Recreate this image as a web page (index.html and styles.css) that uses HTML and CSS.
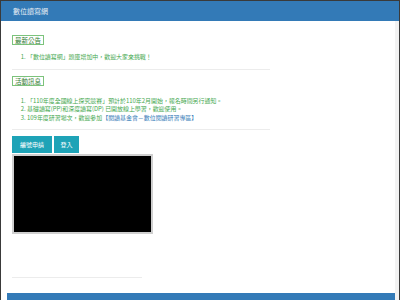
FILE: index.html
```html
<!DOCTYPE html>
<html lang="zh-Hant">
<head>
<meta charset="utf-8">
<link rel="stylesheet" href="styles.css">
</head>
<body>
<div class="window">
  <header class="header"><span class="title">數位讀寫網</span></header>
  <div class="body">
    <div class="main">
      <section class="sec sec-first">
        <div class="label">最新公告</div>
        <ol class="list">
          <li>「數位讀寫網」題庫增加中，歡迎大家來挑戰！</li>
        </ol>
      </section>
      <hr class="sep">
      <section class="sec">
        <div class="label">活動訊息</div>
        <ol class="list list2">
          <li>「110年度全國線上探究競賽」預計於110年2月開始，報名時間另行通知。</li>
          <li>基礎讀寫(PP)和深度讀寫(DP) 已開放線上學習，歡迎使用。</li>
          <li>109年度研習場次，歡迎參加<a class="link" href="#">【閱讀基金會－數位閱讀研習專區】</a></li>
        </ol>
      </section>
      <hr class="sep">
      <div class="tabs">
        <span class="tab tab-wide">編號申請</span>
        <span class="tab">登入</span>
      </div>
      <div class="video"></div>
      <hr class="sep sep-short">
      <div class="footer"></div>
    </div>
    <div class="rail"></div>
  </div>
</div>
</body>
</html>
```
FILE: styles.css
```css
html, body {
  margin: 0;
  padding: 0;
  background: #ffffff;
}
body {
  font-family: "Noto Sans CJK TC", "Noto Sans", sans-serif;
}
.window {
  width: 400px;
  height: 300px;
  box-sizing: border-box;
  border: 1px solid #3a3a3a;
  border-bottom: none;
  display: flex;
  flex-direction: column;
  overflow: hidden;
}
.header {
  height: 20px;
  background: #337ab7;
  display: flex;
  align-items: center;
  padding-left: 12px;
  flex-shrink: 0;
}
.title {
  color: #e8eef5;
  font-size: 7px;
  line-height: 1;
}
.body {
  flex: 1;
  display: flex;
}
.main {
  flex: 1;
  display: flex;
  flex-direction: column;
  padding-left: 11px;
}
.rail {
  width: 4px;
  background: #f2f2f2;
}
.sec-first {
  margin-top: 14px;
}
.sec {
  display: flex;
  flex-direction: column;
  align-items: flex-start;
}
.label {
  border: 1px solid #7cc37c;
  color: #2f7a2f;
  font-size: 6.5px;
  line-height: 8px;
  padding: 0 2px;
}
.list {
  margin: 8px 0 0 0;
  padding-left: 15px;
  color: #45a84f;
  font-size: 5.95px;
  line-height: 8.5px;
}
.list2 {
  margin-top: 11px;
}
.link {
  color: #337ab7;
  text-decoration: none;
}
.sep {
  width: 258px;
  margin: 7px 0 6px 0;
  border: none;
  border-top: 1px solid #ececec;
  height: 0;
}
.tabs {
  display: flex;
  gap: 2px;
}
.tab {
  height: 17px;
  width: 25px;
  background: #1ea3b7;
  color: #ffffff;
  font-size: 6px;
  display: flex;
  align-items: center;
  justify-content: center;
}
.tab-wide {
  width: 40px;
}
.video {
  width: 137px;
  height: 76px;
  background: #000000;
  border: 2px solid #cfcfcf;
  margin-top: 1px;
}
.sep-short {
  width: 130px;
  margin-top: 43px;
}
.footer {
  margin-top: auto;
  margin-left: -5px;
  height: 7px;
  background: #337ab7;
}
```
